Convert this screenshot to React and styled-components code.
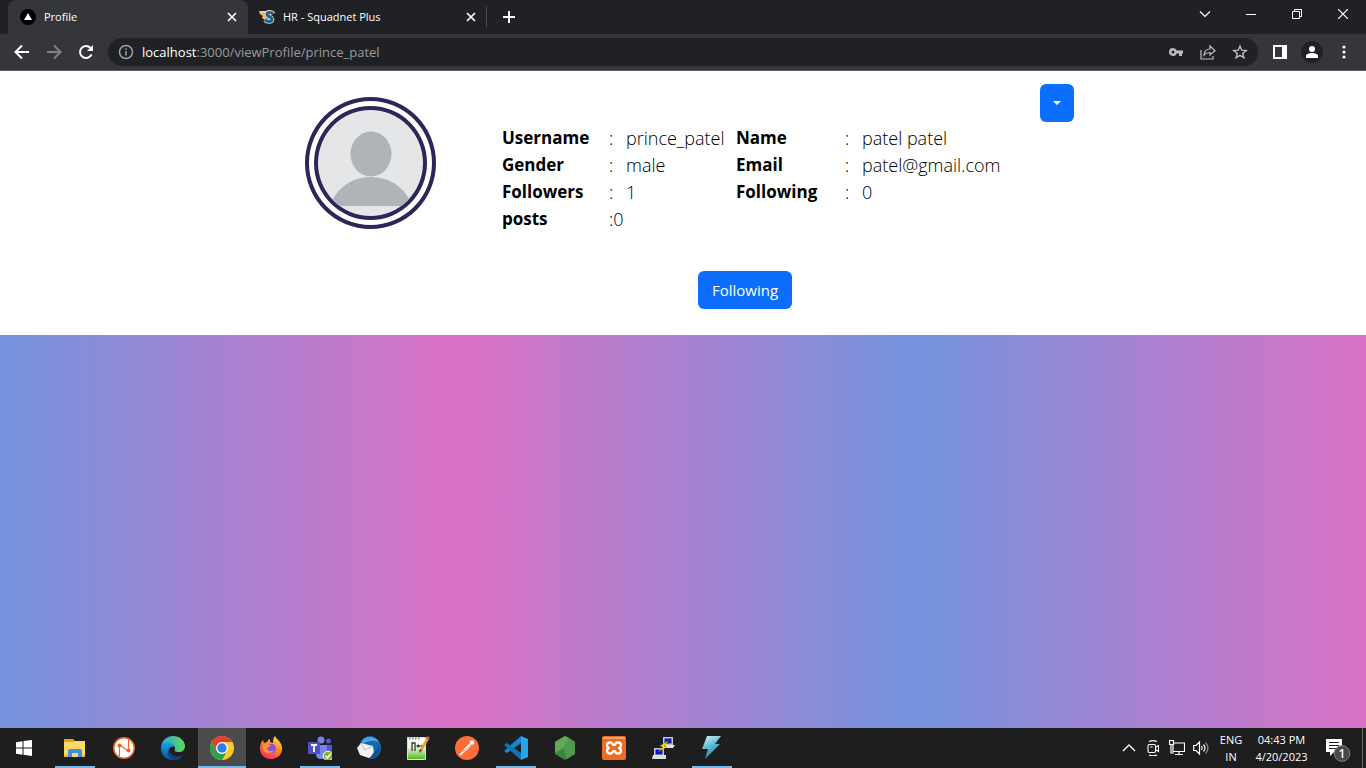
import React from "react";
import styled, { createGlobalStyle } from "styled-components";

const GlobalStyle = createGlobalStyle`
  *, *::before, *::after { box-sizing: border-box; }
  body {
    margin: 0;
    font-family: "Open Sans", "Noto Sans", sans-serif;
    color: #212529;
    background: #fff;
  }
  button, input { font: inherit; color: inherit; }
  button { border: 0; padding: 0; background: none; cursor: pointer; }
  svg { display: block; flex: none; }
`;

const Screen = styled.div`
  display: flex;
  flex-direction: column;
  min-height: 100vh;
`;

/* ---------- browser chrome ---------- */

const TabStrip = styled.div`
  display: flex;
  height: 34px;
  padding-left: 8px;
  background: #202124;
  color: #fff;
`;

const TabItem = styled.div`
  display: flex;
  align-items: center;
  width: ${(p) => (p.$active ? 240 : 238)}px;
  padding: 0 ${(p) => (p.$active ? 8 : 7)}px 0 ${(p) => (p.$active ? 12 : 11)}px;
  border-radius: 8px 8px 0 0;
  background: ${(p) => (p.$active ? "#35363a" : "transparent")};
`;

const TabLabel = styled.button`
  display: flex;
  flex: 1;
  align-items: center;
  gap: 8px;
  font-size: 11px;
  line-height: 16px;
  white-space: nowrap;
`;

const IconButton = styled.button`
  display: flex;
  align-items: center;
  justify-content: center;
  width: ${(p) => p.$w || 32}px;
  height: ${(p) => p.$h || 28}px;
  color: ${(p) => p.$color || "#fff"};
`;

const TabDivider = styled.span`
  align-self: center;
  width: 1px;
  height: 20px;
  background: #4a4c50;
`;

const WindowControls = styled.div`
  display: flex;
  margin-left: auto;
`;

const Toolbar = styled.div`
  display: flex;
  align-items: center;
  height: 37px;
  padding: 0 6px;
  background: #35363a;
  border-bottom: 1px solid #5b5660;
  color: #fff;
`;

const AddressBar = styled.form`
  display: flex;
  flex: 1;
  align-items: center;
  height: 28px;
  margin: 0 6px;
  padding: 0 2px 0 10px;
  border-radius: 14px;
  background: #202124;
  font-size: 13px;
  line-height: 20px;
`;

const Host = styled.label`
  padding-left: 8px;
  color: #fff;
`;

const PathInput = styled.input`
  flex: 1;
  min-width: 0;
  padding: 0;
  border: 0;
  outline: 0;
  background: transparent;
  color: #9a9b9e;
`;

/* ---------- profile page ---------- */

const Page = styled.main`
  display: flex;
  flex: 1;
  flex-direction: column;
  background: linear-gradient(
    to right,
    #7793dd 0%, #7793dd 1%,
    #da71c5 33%, #da71c5 34%,
    #7793dd 66%, #7793dd 68%,
    #da71c5 100%
  );
`;

const ProfilePanel = styled.section`
  background: #fff;
`;

const Container = styled.div`
  display: flex;
  align-items: flex-start;
  max-width: 1140px;
  margin: 0 auto;
  padding: 13px 179px 26px 192px;
`;

const AvatarRing = styled.div`
  flex: none;
  margin: 13px 66px 0 0;
  padding: 5px;
  border: 4px solid #2d2659;
  border-radius: 50%;
`;

const AvatarImage = styled.div`
  overflow: hidden;
  width: 113px;
  height: 114px;
  border: 4px solid #2d2659;
  border-radius: 50%;
  background: #e4e6e7;
`;

const Info = styled.div`
  display: flex;
  flex-direction: column;
  padding-top: 40px;
`;

const Details = styled.table`
  border-collapse: collapse;
  table-layout: fixed;
  width: 499px;
  line-height: 27px;
  white-space: nowrap;

  tr { height: 27px; }
  th, td { padding: 0; text-align: left; line-height: 26px; }
  th { color: #000; font-size: 17px; font-weight: 700; }
  td { font-size: 18px; font-weight: 300; color: #000; }
`;

const Actions = styled.div`
  padding: 39px 0 0 196px;
`;

const PrimaryButton = styled.button`
  display: flex;
  align-items: center;
  justify-content: center;
  min-width: ${(p) => p.$w}px;
  height: 38px;
  border-radius: 6px;
  background: #0d6efd;
  color: #fff;
  font-size: 15px;
  line-height: 24px;
`;

const MenuSlot = styled.div`
  margin-left: auto;
`;

const Caret = styled.span`
  border: 4px solid transparent;
  border-top-color: #fff;
  border-bottom: 0;
`;

/* ---------- taskbar ---------- */

const Taskbar = styled.footer`
  display: flex;
  height: 40px;
  background: #1e1e1e;
  color: #fff;
`;

const Apps = styled.nav`
  display: flex;
  gap: 1px;
`;

const AppButton = styled.button`
  display: flex;
  flex-direction: column;
  align-items: center;
  justify-content: space-between;
  width: 48px;
  padding-top: 8px;
  background: ${(p) => (p.$active ? "#4b4b4b" : "transparent")};

  &:first-child { margin-right: 2px; }
  &::after {
    content: "";
    width: ${(p) => (p.$active ? 48 : 40)}px;
    height: 2px;
    background: ${(p) => (p.$open ? "#76b9ed" : "transparent")};
  }
`;

const Tray = styled.div`
  display: flex;
  align-items: center;
  margin-left: auto;
  font-size: 11px;
  line-height: 17px;
  text-align: center;
`;

const TrayText = styled.button`
  display: flex;
  flex-direction: column;
  align-items: center;
  width: ${(p) => p.$w}px;
`;

const DesktopEdge = styled.span`
  width: 4px;
  height: 40px;
  border-left: 1px solid #6a6a6a;
`;

/* ---------- icons ---------- */

function Line({ size = 16, box = 16, w = 2, children }) {
  return (
    <svg width={size} height={size} viewBox={`0 0 ${box} ${box}`} fill="none" stroke="currentColor" strokeWidth={w} aria-hidden="true">
      {children}
    </svg>
  );
}

const CloseTab = () => <Line size={10} box={10} w={1.7}><path d="M1 1l8 8M9 1L1 9" /></Line>;

const NextLogo = () => (
  <svg width="16" height="16" viewBox="0 0 16 16" aria-hidden="true">
    <circle cx="8" cy="8" r="8" fill="#000" />
    <path d="M8 4l4 7H4z" fill="#fff" />
  </svg>
);

const SquadnetLogo = () => (
  <svg width="16" height="16" viewBox="0 0 16 16" aria-hidden="true">
    <path d="M0 2h9v3L6 11 3 9l1-2-3-2z" fill="#f6c98d" />
    <path d="M1 5h5M3 8h3" stroke="#d99a4e" />
    <path d="M14 5C13 3 8 2.500 8 5.500C8 8 13 7.500 13 10.500C13 13 8 13 6 11" fill="none" stroke="#f8dba9" strokeWidth="4.600" />
    <path d="M14 5C13 3 8 2.500 8 5.500C8 8 13 7.500 13 10.500C13 13 8 13 6 11" fill="none" stroke="#17649f" strokeWidth="3" />
  </svg>
);

const BackIcon = () => <Line><path d="M15 8H2M8 1.500L1.500 8 8 14.500" /></Line>;
const ForwardIcon = () => <Line><path d="M1 8h13M8 1.500L14.500 8 8 14.500" /></Line>;
const ReloadIcon = () => (
  <Line>
    <path d="M13.500 10.500A6 6 0 1 1 12.500 4" />
    <path d="M15 1v6H9z" fill="currentColor" stroke="none" />
  </Line>
);
const InfoIcon = () => (
  <Line w={1.5}>
    <circle cx="8" cy="8" r="6.500" />
    <path d="M8 7v4.500M8 4.200v1.600" />
  </Line>
);
const KeyIcon = () => (
  <svg width="14" height="8" viewBox="0 0 14 8" fill="currentColor" aria-hidden="true">
    <path fillRule="evenodd" d="M4 0a4 4 0 0 1 3.700 2.500H14v3h-1V8h-3V5.500H7.700A4 4 0 1 1 4 0zm0 2.500a1.500 1.500 0 1 0 0 3 1.500 1.500 0 0 0 0-3z" />
  </svg>
);
const ShareIcon = () => (
  <Line w={1.2}>
    <path d="M1 6v9h12v-3" />
    <path d="M4 11c.4-4 2.600-6 6-6V2l5 4.800L10 11V8.500c-2.600 0-4.400.6-6 2.500z" />
  </Line>
);
const StarIcon = () => (
  <Line w={1.4}><path d="M8 2l1.700 4.200 4.500.3-3.500 2.900 1.200 4.400L8 11.300l-3.900 2.500 1.200-4.400-3.500-2.900 4.500-.3z" /></Line>
);
const SidePanelIcon = () => (
  <svg width="14" height="14" viewBox="0 0 14 14" aria-hidden="true">
    <path fill="#fff" fillRule="evenodd" d="M0 0h14v14H0zM2 2v10h7V2z" />
  </svg>
);
const UserIcon = () => (
  <svg width="22" height="22" viewBox="0 0 22 22" aria-hidden="true">
    <circle cx="11" cy="11" r="11" fill="#202124" />
    <circle cx="11" cy="8" r="3" fill="#fff" />
    <path d="M5 17v-2c0-4 12-4 12 0v2z" fill="#fff" />
  </svg>
);
const DotsIcon = () => (
  <svg width="4" height="14" viewBox="0 0 4 14" fill="#fff" aria-hidden="true">
    <circle cx="2" cy="2" r="1.600" /><circle cx="2" cy="7" r="1.600" /><circle cx="2" cy="12" r="1.600" />
  </svg>
);

const Person = () => (
  <svg width="105" height="106" viewBox="0 0 105 106" role="img" aria-label="Profile picture">
    <ellipse cx="53" cy="44" rx="20.500" ry="22.500" fill="#aeb4b7" />
    <path d="M12 96C18 78 34 67 53 67s35 11 41 29z" fill="#aeb4b7" />
  </svg>
);

function Glyph({ children }) {
  return <svg width="24" height="24" viewBox="0 0 24 24" aria-hidden="true">{children}</svg>;
}

const WindowsIcon = () => (
  <Glyph><path fill="#fff" d="M4 6.300l6.500-1v6.200H4zM11.500 5.100L20 4v7.500h-8.500zM4 12.500h6.500v6.200L4 17.700zM11.500 12.500H20V20l-8.500-1.200z" /></Glyph>
);
const ExplorerIcon = () => (
  <Glyph>
    <path d="M1 3h9l2 2h10v16H1z" fill="#e2a221" />
    <path d="M1 6h9l2-1h10v16H1z" fill="#ffd765" />
    <path d="M5 21v-6q0-2 2-2h10q2 0 2 2v6h-4v-4H9v4z" fill="#3b94da" />
    <path d="M1 19h4v2H1zm18 0h3v2h-3z" fill="#efb93c" />
  </Glyph>
);
const OrangeNIcon = () => (
  <Glyph>
    <circle cx="12" cy="12" r="10.200" fill="#fff" stroke="#e87032" strokeWidth="1.600" />
    <path d="M7.500 20V9l9 6V3" fill="none" stroke="#e8642a" strokeWidth="1.100" />
    <circle cx="7.500" cy="9.500" r="2" fill="#e8642a" /><circle cx="16.500" cy="14.500" r="2" fill="#e8642a" />
  </Glyph>
);
const EdgeIcon = () => (
  <Glyph>
    <defs>
      <linearGradient id="edgeTop"><stop offset="0" stopColor="#2aa6e0" /><stop offset="1" stopColor="#62d957" /></linearGradient>
      <linearGradient id="edgeLow" x2="0" y2="1"><stop offset="0" stopColor="#1b9de2" /><stop offset="1" stopColor="#0d55a8" /></linearGradient>
    </defs>
    <path d="M0 11C1 4 6 0 12 0c7 0 12 5 12 10 0 4-3 6-6 6-4 0-5-1-4-3 1-5-8-8-14-2z" fill="url(#edgeTop)" />
    <path d="M0 12C1 5 12 5 13 11c-3-1-5 1-5 4 0 6 8 8 14 4-2 3-5 5-10 5C5 24 0 19 0 12z" fill="url(#edgeLow)" />
    <path d="M8 13c-3 4-1 10 5 11 4 0 7-2 9-5-6 3-13 1-13-5z" fill="#123f80" />
  </Glyph>
);
const ChromeIcon = () => (
  <Glyph>
    <circle cx="12" cy="12" r="12" fill="#fdcb25" />
    <path d="M1.600 6A12 12 0 0 1 22.400 6H12L6.800 15z" fill="#e13d31" />
    <path d="M1.600 6A12 12 0 0 0 12 24l5.200-9H6.800z" fill="#2da04e" />
    <circle cx="12" cy="12" r="6" fill="#fff" /><circle cx="12" cy="12" r="4.700" fill="#2f7de9" />
  </Glyph>
);
const FirefoxIcon = () => (
  <Glyph>
    <defs>
      <linearGradient id="foxBody" x1=".8" x2=".3" y2="1"><stop offset="0" stopColor="#ffe34a" /><stop offset=".45" stopColor="#ff8b24" /><stop offset="1" stopColor="#f02a68" /></linearGradient>
    </defs>
    <path d="M16 0c1 3 6 5 7 11 1 7-4 12-11 12C5 23 1 18 1 13 1 9 2 6 4 4l1 3 3-1c1-2 2-3 3-3v3l3 1c0-3 0-5 2-7z" fill="url(#foxBody)" />
    <circle cx="12" cy="12.500" r="4.800" fill="#8550dd" />
    <path d="M4 9c3-2 5 0 8 0-1 2-3 2-4 3 0 3 4 4 7 2-2 5-10 4-11-1z" fill="#ff9230" />
  </Glyph>
);
const TeamsIcon = () => (
  <Glyph>
    <circle cx="13" cy="4" r="3.500" fill="#7b83eb" /><circle cx="20.500" cy="5" r="2.500" fill="#5059c9" />
    <path d="M17 9h7v7q-1 4-5 3z" fill="#5059c9" />
    <path d="M8 9h11v9q-1 5-6 5t-5-5z" fill="#7b83eb" />
    <path d="M0 6h12v12H0z" fill="#4b53bc" />
    <path d="M3 9h6M6 9v7" stroke="#fff" strokeWidth="1.800" />
    <circle cx="20" cy="20" r="4.800" fill="#80b724" stroke="#fff" />
    <path d="M17.500 20l2 2 3-4" fill="none" stroke="#fff" strokeWidth="1.500" />
  </Glyph>
);
const ThunderbirdIcon = () => (
  <Glyph>
    <path d="M3 9C3 3 9 0 14 0c6 1 10 6 10 12 0 6-4 10-9 11l-9-3z" fill="#1767ab" />
    <path d="M5 5c4-6 13-5 17 1-5-2-10-2-16 2z" fill="#4aa6e4" />
    <path d="M0 12L4 7l12 3 1 8-5 4-9-3z" fill="#f2f3f5" />
    <path d="M4 8l4 6 8-4" fill="none" stroke="#b8bec6" />
    <path d="M12 23c9 0 12-8 10-14-1 5-5 6-7 10z" fill="#145090" />
  </Glyph>
);
const NotepadIcon = () => (
  <Glyph>
    <defs><linearGradient id="notePage" x2="0" y2="1"><stop offset="0" stopColor="#fff" /><stop offset=".45" stopColor="#e9f5dc" /><stop offset="1" stopColor="#4fb51f" /></linearGradient></defs>
    <path d="M1.500 1.500h18v22h-18z" fill="url(#notePage)" stroke="#dde0d8" />
    <path d="M3 2.500h11" stroke="#81857d" strokeWidth="2" strokeDasharray="1.500 1.500" />
    <path d="M6 15V7h3v8M10.500 10h3.500M12.200 8.500v3M14.500 10H18" fill="none" stroke="#333" strokeWidth="1.300" />
    <path d="M22 2l-7 12" stroke="#f0a32b" strokeWidth="2.600" /><path d="M21 0l3 1.500-1 2-3-1.500z" fill="#cc5b4d" /><path d="M13.800 13l2.300 1.500-3 2.500z" fill="#333" />
  </Glyph>
);
const PostmanIcon = () => (
  <Glyph>
    <circle cx="12" cy="12" r="12" fill="#ff6c37" />
    <circle cx="17" cy="6.500" r="2.300" fill="#fff" />
    <path d="M15.500 8.500L10 14" stroke="#fff" strokeWidth="3" /><path d="M11 13l-6 6" stroke="#fff" strokeWidth="1.800" /><path d="M8 16l8-7" stroke="#ef683a" strokeWidth=".7" />
  </Glyph>
);
const CodeIcon = () => (
  <Glyph>
    <path d="M17 0L0 15l3 2L17 7z" fill="#1688d0" /><path d="M17 24L0 9l3-2 14 10z" fill="#0877b9" />
    <path d="M17 0l7 3v18l-7 3z" fill="#26a4ef" />
  </Glyph>
);
const NodeIcon = () => (
  <Glyph>
    <path d="M12 0l10 6v12l-10 6-10-6V6z" fill="#3e863d" />
    <path d="M12 0L2 6v11l10-6 4-9z" fill="#65a955" /><path d="M16 2l6 4v12l-8 5-4-11z" fill="#50984b" />
  </Glyph>
);
const XamppIcon = () => (
  <Glyph>
    <rect width="24" height="24" rx="2" fill="#ee6c22" /><path d="M1 1h22v2H1z" fill="#f7a475" />
    <path d="M8.500 6.500C4 6.500 4.500 10.500 6.500 12c-2 1.500-2.500 5.500 2 5.500C11 17.500 10 15 12 15s1 2.500 3.500 2.500c4.500 0 4-4 2-5.500 2-1.500 2.500-5.500-2-5.500C13 6.500 14 9 12 9S11 6.500 8.500 6.500z" fill="none" stroke="#fff" strokeWidth="2.400" />
  </Glyph>
);
const PuttyIcon = () => (
  <Glyph>
    <path d="M12 1h10v8H12z" fill="#c9c9c9" /><path d="M13.500 2.500h7v5h-7z" fill="#1010d0" /><path d="M14 9h10l-2 3H13z" fill="#e4e4e4" />
    <path d="M3 12h10v8H3z" fill="#c9c9c9" /><path d="M4.500 13.500h7v5h-7z" fill="#1010d0" /><path d="M2 19h13v4H1z" fill="#e0e0e0" />
    <path d="M18 4l-9 6 3 1-5 5 9-5-3-1z" fill="#ffef00" stroke="#665f00" strokeWidth=".4" />
  </Glyph>
);
const BoltIcon = () => (
  <Glyph>
    <defs><linearGradient id="bolt" x2=".4" y2="1"><stop offset="0" stopColor="#d8f5fb" /><stop offset=".5" stopColor="#61bdd7" /><stop offset="1" stopColor="#2787a7" /></linearGradient></defs>
    <path d="M7 0h14l-6 8h5L5 23l3-10H2z" fill="url(#bolt)" />
  </Glyph>
);

const ChevronUp = () => <Line size={14} box={14} w={1.4}><path d="M1 10l6-6 6 6" /></Line>;
const MeetIcon = () => (
  <Line w={1.1}>
    <path d="M4 1.500Q8-.2 12 1.500M4 15Q8 16.700 12 15M10.500 7.500l3-2v6l-3-2" />
    <rect x="3" y="4.500" width="7.500" height="8" rx="1.500" /><path d="M5.500 7h2" />
  </Line>
);
const NetworkIcon = () => (
  <Line w={1.2}>
    <path d="M4 3h11.500v8.500H4zM10 11.500V14M6 14.500h8M2 5v8h3" /><path d="M.5.500h4v4h-4z" fill="#1e1e1e" />
  </Line>
);
const SpeakerIcon = () => (
  <Line w={1.2}>
    <path d="M.7 5.500H3L6.500 2v12L3 10.500H.7zM8.500 6q1.500 2 0 4M10.500 4.500q3 3.500 0 7" />
    <path d="M12.500 2.500q5 5.500 0 11" opacity=".5" />
  </Line>
);
const NotificationIcon = () => (
  <svg width="26" height="28" viewBox="0 0 26 28" aria-hidden="true">
    <path d="M1 5h16v13H9l-4 4v-4H1z" fill="#fff" />
    <path d="M4 8.500h10M4 11.500h10M4 14.500h7" stroke="#1e1e1e" />
    <circle cx="17" cy="19.500" r="7.800" fill="#484848" stroke="#858585" />
    <text x="17" y="24" fill="#fff" fontSize="12" fontWeight="600" textAnchor="middle">1</text>
  </svg>
);

/* ---------- data ---------- */

const rows = [
  ["Username", "prince_patel", "Name", "patel patel"],
  ["Gender", "male", "Email", "patel@gmail.com"],
  ["Followers", "1", "Following", "0"],
];

const apps = [
  ["Start", WindowsIcon],
  ["File Explorer", ExplorerIcon, true],
  ["Server", OrangeNIcon],
  ["Edge", EdgeIcon],
  ["Chrome", ChromeIcon, true, true],
  ["Firefox", FirefoxIcon],
  ["Teams", TeamsIcon, true],
  ["Thunderbird", ThunderbirdIcon],
  ["Notepad++", NotepadIcon],
  ["Postman", PostmanIcon],
  ["Visual Studio Code", CodeIcon, true],
  ["Node.js", NodeIcon],
  ["XAMPP", XamppIcon],
  ["PuTTY", PuttyIcon],
  ["Bolt", BoltIcon, true],
];

function Tab({ title, active, icon }) {
  return (
    <TabItem $active={active}>
      <TabLabel type="button">{icon}{title}</TabLabel>
      <IconButton type="button" $w={16} aria-label={`Close ${title}`}><CloseTab /></IconButton>
    </TabItem>
  );
}

export default function App() {
  return (
    <Screen>
      <GlobalStyle />
      <header>
        <TabStrip>
          <Tab title="Profile" active icon={<NextLogo />} />
          <Tab title="HR - Squadnet Plus" icon={<SquadnetLogo />} />
          <TabDivider />
          <IconButton type="button" $w={44} $h={34} aria-label="New tab"><Line size={12} box={12}><path d="M6 0v12M0 6h12" /></Line></IconButton>
          <WindowControls>
            <IconButton type="button" $w={46} aria-label="Search tabs"><Line size={12} box={12} w={1.2}><path d="M1 3.500l5 5 5-5" /></Line></IconButton>
            <IconButton type="button" $w={46} aria-label="Minimize"><Line size={10} box={10} w={1}><path d="M0 5.500h10" /></Line></IconButton>
            <IconButton type="button" $w={46} aria-label="Restore"><Line size={10} box={10} w={1}><path d="M.5 2.500h7v7h-7zM2.500 2.500v-2h7v7h-2" /></Line></IconButton>
            <IconButton type="button" $w={46} aria-label="Close"><Line size={10} box={10} w={1.2}><path d="M0 0l10 10M10 0L0 10" /></Line></IconButton>
          </WindowControls>
        </TabStrip>
        <Toolbar>
          <IconButton type="button" aria-label="Back"><BackIcon /></IconButton>
          <IconButton type="button" $color="#818285" aria-label="Forward"><ForwardIcon /></IconButton>
          <IconButton type="button" aria-label="Reload"><ReloadIcon /></IconButton>
          <AddressBar>
            <IconButton type="button" $w={16} $color="#9aa0a6" aria-label="Site information"><InfoIcon /></IconButton>
            <Host htmlFor="address">localhost</Host>
            <PathInput id="address" defaultValue=":3000/viewProfile/prince_patel" />
            <IconButton type="button" $color="#bdbdbd" aria-label="Passwords"><KeyIcon /></IconButton>
            <IconButton type="button" $color="#bdbdbd" aria-label="Share"><ShareIcon /></IconButton>
            <IconButton type="button" $color="#bdbdbd" aria-label="Bookmark"><StarIcon /></IconButton>
          </AddressBar>
          <IconButton type="button" aria-label="Side panel"><SidePanelIcon /></IconButton>
          <IconButton type="button" aria-label="Account"><UserIcon /></IconButton>
          <IconButton type="button" aria-label="Menu"><DotsIcon /></IconButton>
        </Toolbar>
      </header>

      <Page>
        <ProfilePanel>
          <Container>
            <AvatarRing><AvatarImage><Person /></AvatarImage></AvatarRing>
            <Info>
              <Details>
                <colgroup>
                  <col width="107" /><col width="17" /><col width="110" />
                  <col width="109" /><col width="17" /><col width="139" />
                </colgroup>
                <tbody>
                  {rows.map(([a, b, c, d]) => (
                    <tr key={a}>
                      <th scope="row">{a}</th><td>:</td><td>{b}</td>
                      <th scope="row">{c}</th><td>:</td><td>{d}</td>
                    </tr>
                  ))}
                  <tr><th scope="row">posts</th><td colSpan={2}>:0</td></tr>
                </tbody>
              </Details>
              <Actions><PrimaryButton type="button" $w={94}>Following</PrimaryButton></Actions>
            </Info>
            <MenuSlot><PrimaryButton type="button" $w={34} aria-label="Profile options"><Caret /></PrimaryButton></MenuSlot>
          </Container>
        </ProfilePanel>
      </Page>

      <Taskbar>
        <Apps aria-label="Applications">
          {apps.map(([name, Icon, open, active]) => (
            <AppButton type="button" key={name} aria-label={name} $open={open} $active={active}><Icon /></AppButton>
          ))}
        </Apps>
        <Tray>
          <IconButton type="button" $w={24} aria-label="Hidden icons"><ChevronUp /></IconButton>
          <IconButton type="button" $w={24} aria-label="Meet now"><MeetIcon /></IconButton>
          <IconButton type="button" $w={24} aria-label="Network"><NetworkIcon /></IconButton>
          <IconButton type="button" $w={24} aria-label="Volume"><SpeakerIcon /></IconButton>
          <TrayText type="button" $w={36}><span>ENG</span><span>IN</span></TrayText>
          <TrayText type="button" $w={65}><span>04:43 PM</span><span>4/20/2023</span></TrayText>
          <IconButton type="button" $w={48} aria-label="Notifications"><NotificationIcon /></IconButton>
          <DesktopEdge />
        </Tray>
      </Taskbar>
    </Screen>
  );
}
